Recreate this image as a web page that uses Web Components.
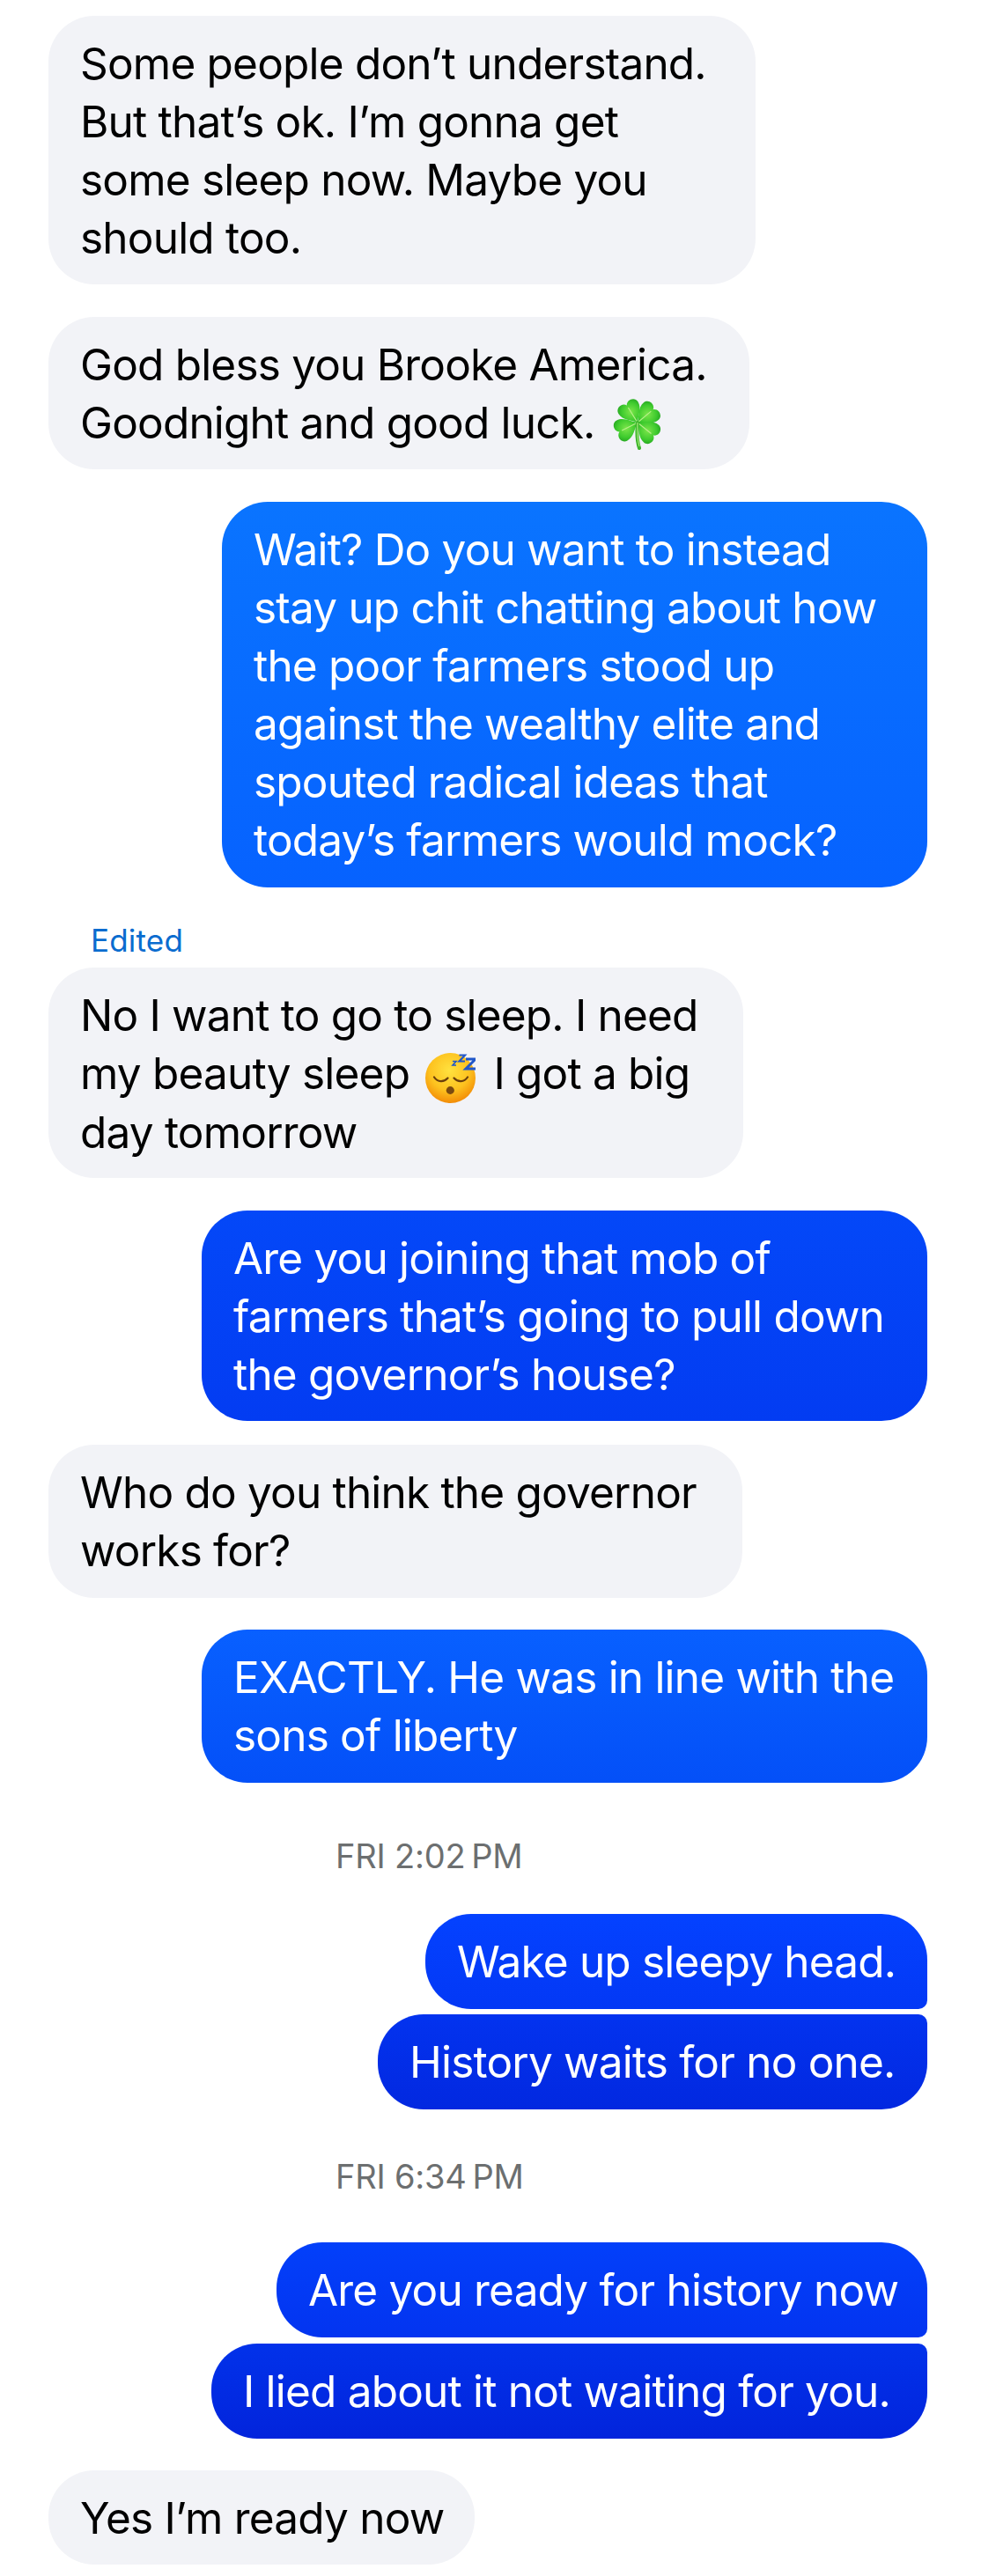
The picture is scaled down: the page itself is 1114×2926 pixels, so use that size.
<!DOCTYPE html>
<html>
<head>
<meta charset="utf-8">
<title>Chat</title>
<style>
html,body{margin:0;padding:0;background:#fff;}
body{font-family:"Inter","Liberation Sans",sans-serif;}
</style>
</head>
<body>
<chat-thread>
  <chat-bubble w="803" h="305" gap="18">Some people don’t understand.<br>But that’s ok. I’m gonna get<br>some sleep now. Maybe you<br>should too.</chat-bubble>
  <chat-bubble w="796" h="173" gap="37">God bless you Brooke America.<br>Goodnight and good luck. <emoji-clover></emoji-clover></chat-bubble>
  <chat-bubble out w="801" h="438" gap="37" from="#0a74ff" to="#0662ff">Wait? Do you want to instead<br>stay up chit chatting about how<br>the poor farmers stood up<br>against the wealthy elite and<br>spouted radical ideas that<br>today’s farmers would mock?</chat-bubble>
  <chat-note gap="43" left="103">Edited</chat-note>
  <chat-bubble w="789" h="239" gap="14">No I want to go to sleep. I need<br>my beauty sleep <emoji-sleep></emoji-sleep> I got a big<br>day tomorrow</chat-bubble>
  <chat-bubble out w="824" h="239" gap="37" from="#0448f8" to="#033cf2">Are you joining that mob of<br>farmers that’s going to pull down<br>the governor’s house?</chat-bubble>
  <chat-bubble w="788" h="174" gap="27">Who do you think the governor<br>works for?</chat-bubble>
  <chat-bubble out w="824" h="174" gap="36" from="#0860ff" to="#0450f8">EXACTLY. He was in line with the<br>sons of liberty</chat-bubble>
  <chat-time gap="65" left="381">FRI 2:02&#8239;PM</chat-time>
  <chat-bubble out first w="570" h="108" gap="48" from="#0442ff" to="#0338f5">Wake up sleepy head.</chat-bubble>
  <chat-bubble out last w="624" h="108" gap="6" from="#0333ef" to="#0228e0">History waits for no one.</chat-bubble>
  <chat-time gap="58" left="381">FRI 6:34&#8239;PM</chat-time>
  <chat-bubble out first w="739" h="108" gap="57" from="#0340fa" to="#0334f0">Are you ready for history now</chat-bubble>
  <chat-bubble out last w="813" h="108" gap="7" from="#0232ea" to="#0224dc">I lied about it not waiting for you.</chat-bubble>
  <chat-bubble w="484" h="107" gap="36">Yes I’m ready now</chat-bubble>
</chat-thread>

<script>
class ChatThread extends HTMLElement {
  constructor(){
    super();
    this.attachShadow({mode:'open'});
    this.shadowRoot.innerHTML = `
      <style>
        :host{display:flex;flex-direction:column;width:1114px;height:2926px;box-sizing:border-box;padding:0 61px 0 55px;overflow:hidden;}
      </style>
      <slot></slot>`;
  }
}

const bubbleTemplate = document.createElement('template');
bubbleTemplate.innerHTML = `
  <style>
    :host{display:flex;justify-content:flex-start;}
    :host([out]){justify-content:flex-end;}
    .b{box-sizing:border-box;padding:20.5px 0 0 36px;border-radius:52px;
       background:#f2f3f7;color:#000;font:400 49.5px/66px "Inter","Liberation Sans",sans-serif;letter-spacing:-.8px;white-space:nowrap;}
    :host([out]) .b{color:#fff;background:linear-gradient(var(--from),var(--to));}
    :host([first]) .b{border-bottom-right-radius:10px;}
    :host([last]) .b{border-top-right-radius:10px;}
  </style>
  <div class="b"><slot></slot></div>`;

class ChatBubble extends HTMLElement {
  constructor(){
    super();
    this.attachShadow({mode:'open'});
    this.shadowRoot.appendChild(bubbleTemplate.content.cloneNode(true));
  }
  connectedCallback(){
    var box = this.shadowRoot.querySelector('.b');
    box.style.width = this.getAttribute('w') + 'px';
    box.style.height = this.getAttribute('h') + 'px';
    box.style.setProperty('--from', this.getAttribute('from') || '#0a7cff');
    box.style.setProperty('--to', this.getAttribute('to') || '#0050ff');
    this.style.marginTop = this.getAttribute('gap') + 'px';
  }
}

class ChatTime extends HTMLElement {
  constructor(){
    super();
    this.attachShadow({mode:'open'});
    this.shadowRoot.innerHTML = `
      <style>
        :host{display:block;color:#6c6f70;font:400 38px/36px "Inter","Liberation Sans",sans-serif;letter-spacing:-.2px;}
      </style>
      <slot></slot>`;
  }
  connectedCallback(){
    this.style.marginTop = this.getAttribute('gap') + 'px';
    this.style.marginLeft = (this.getAttribute('left') - 55) + 'px';
  }
}

class ChatNote extends HTMLElement {
  constructor(){
    super();
    this.attachShadow({mode:'open'});
    this.shadowRoot.innerHTML = `
      <style>
        :host{display:block;color:#0a6ccf;font:400 35px/34px "Inter","Liberation Sans",sans-serif;letter-spacing:.2px;}
      </style>
      <slot></slot>`;
  }
  connectedCallback(){
    this.style.marginTop = this.getAttribute('gap') + 'px';
    this.style.marginLeft = (this.getAttribute('left') - 55) + 'px';
  }
}

class EmojiClover extends HTMLElement {
  constructor(){
    super();
    this.attachShadow({mode:'open'});
    var heart = 'M0 0C-4-6-13-11-13-20C-13-27-3-29 0-23C3-29 13-27 13-20C13-11 4-6 0 0Z';
    var leaves = [-32,50,129,-117].map(a => `
      <g transform="translate(29 31) rotate(${a})">
        <path d="${heart}" fill="url(#lf)"/>
        <path d="M0 0V-20" stroke="#b8f08a" stroke-width="1.2" fill="none"/>
      </g>`).join('');
    this.shadowRoot.innerHTML = `
      <style>
        :host{display:inline-block;width:58px;height:62px;vertical-align:-13px;margin-left:6px;}
        svg{display:block;}
      </style>
      <svg width="58" height="62" viewBox="0 0 58 62">
        <defs>
          <radialGradient id="lf" cx=".5" cy=".45" r=".65">
            <stop offset="0" stop-color="#7be54a"/>
            <stop offset=".6" stop-color="#3fcb2e"/>
            <stop offset="1" stop-color="#1f9c1e"/>
          </radialGradient>
        </defs>
        ${leaves}
        <path d="M29 31C28 41 28 51 31 60" stroke="#3db52c" stroke-width="4" stroke-linecap="round" fill="none"/>
        <path d="M29 31C28.5 41 28.5 50 31 58" stroke="#a8ea7c" stroke-width="1.2" fill="none"/>
      </svg>`;
  }
}

class EmojiSleep extends HTMLElement {
  constructor(){
    super();
    this.attachShadow({mode:'open'});
    this.shadowRoot.innerHTML = `
      <style>
        :host{display:inline-block;width:57px;height:57px;vertical-align:-16px;margin:0 7px 0 5px;}
        svg{display:block;}
      </style>
      <svg width="57" height="57" viewBox="0 0 57 57">
        <defs>
          <radialGradient id="fc" cx=".48" cy=".35" r=".66">
            <stop offset="0" stop-color="#ffe23f"/>
            <stop offset=".6" stop-color="#fdc21f"/>
            <stop offset="1" stop-color="#f28a06"/>
          </radialGradient>
        </defs>
        <circle cx="28.5" cy="28.5" r="28.5" fill="url(#fc)"/>
        <path d="M10 27.5C14 33.5 21 33.5 25.5 28.5M32.5 28.5C37 33.5 44 33.5 48 27.5" stroke="#6b3f0c" stroke-width="2.2" stroke-linecap="round" fill="none"/>
        <ellipse cx="28.3" cy="42.5" rx="4.6" ry="4.4" fill="#7a4a10"/>
        <path d="M31 9.5H35L31 14H35" stroke="#2157c9" stroke-width="1.6" fill="none"/>
        <path d="M38.5 2.5H45L38.5 9.5H45" stroke="#2157c9" stroke-width="2.2" fill="none"/>
        <path d="M46 7H57L46 18H57" stroke="#2157c9" stroke-width="3" fill="none"/>
      </svg>`;
  }
}

customElements.define('chat-thread', ChatThread);
customElements.define('chat-bubble', ChatBubble);
customElements.define('chat-time', ChatTime);
customElements.define('chat-note', ChatNote);
customElements.define('emoji-clover', EmojiClover);
customElements.define('emoji-sleep', EmojiSleep);
</script>
</body>
</html>
